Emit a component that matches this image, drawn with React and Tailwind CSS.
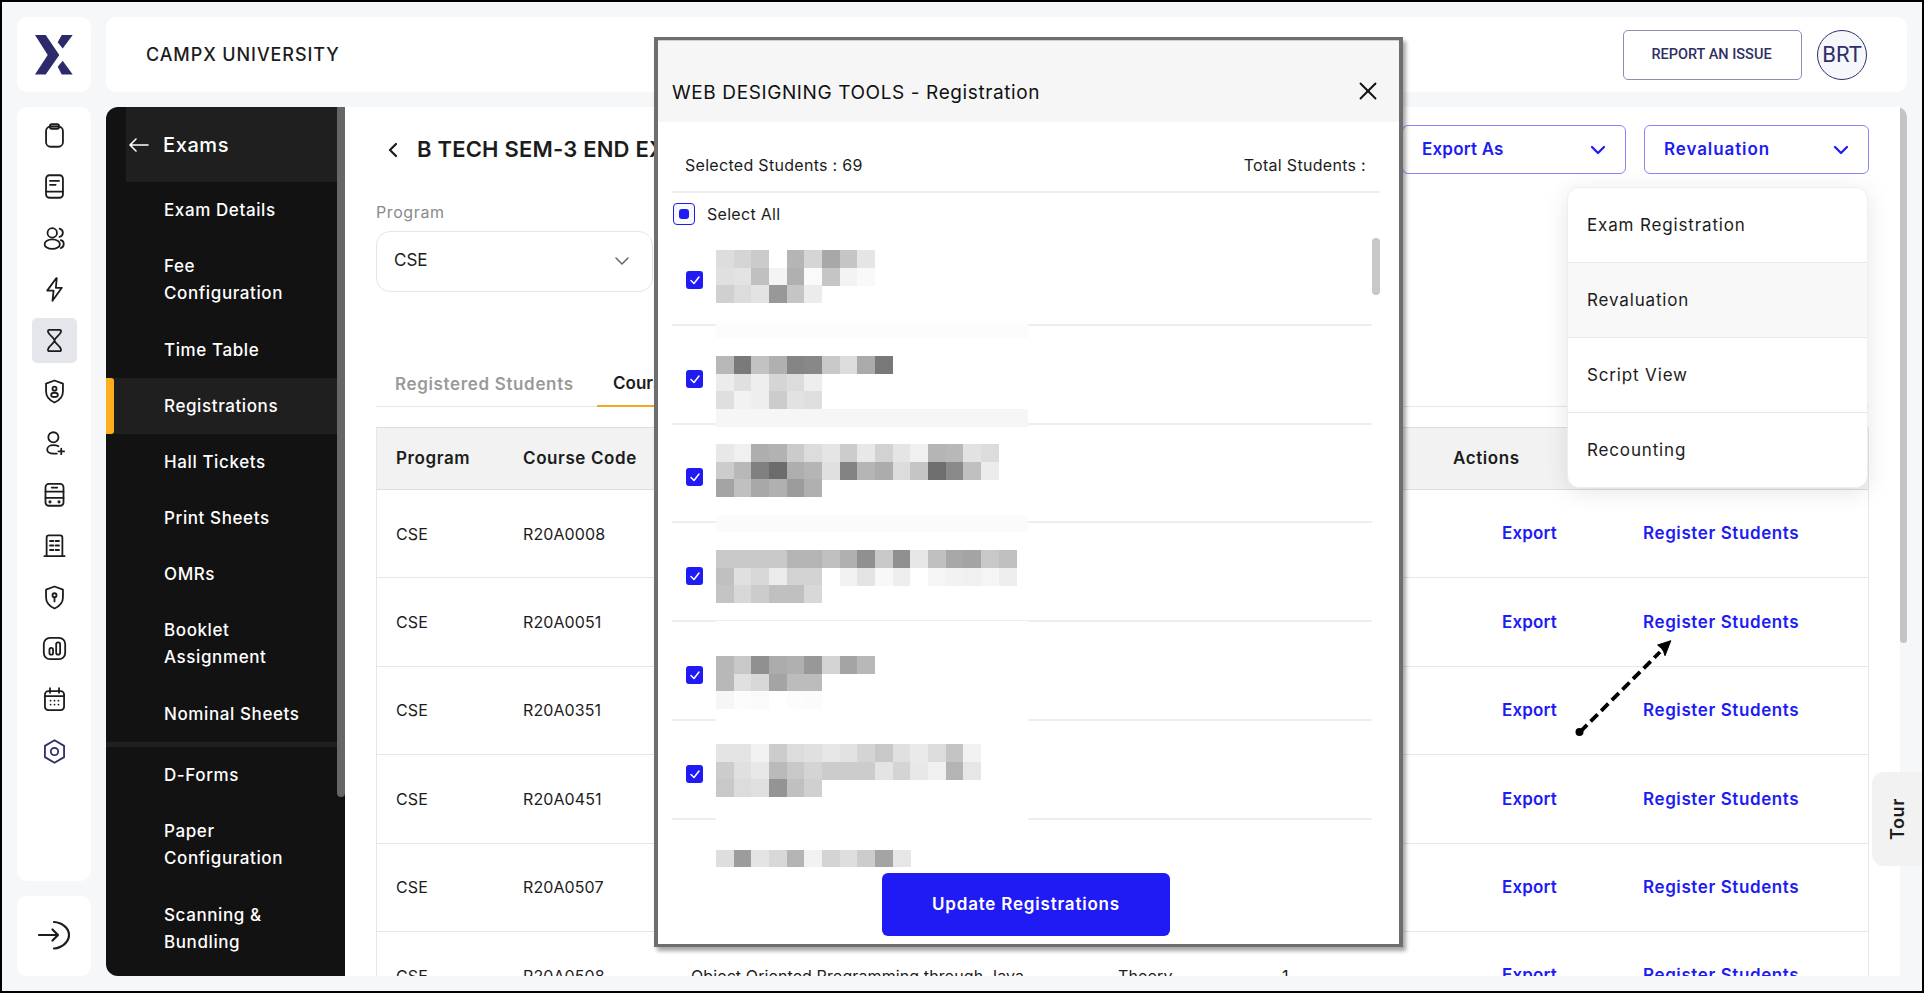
import { ChevronDown, ChevronLeft, X } from 'lucide-react'

const navIcons = [
  <><rect x="4.5" y="4" width="15" height="18" rx="4" /><rect x="8" y="2" width="8" height="4" rx="1.5" /></>,
  <><rect x="4.5" y="2" width="15" height="20" rx="3" /><path d="M4.5 16.5h15M8 7h8M8 10.5h5" /></>,
  <><circle cx="10" cy="7" r="4.2" /><ellipse cx="10" cy="17" rx="6.8" ry="4.3" /><path d="M16.5 3.2a3.8 3.8 0 0 1 0 7.4M17.5 13.5c3.6.8 3.6 6 0 7" /></>,
  <path d="M13.5 2 5.5 13h5.7l-1 9 8.3-11.5h-5.3l.8-8.5Z" />,
  <path d="M7.5 2.5h9c1.2 0 1.5 1 1.2 2-.8 3-5.7 5-5.7 7.5s4.900 4.500 5.700 7.500c.3 1 0 2-1.200 2h-9c-1.200 0-1.500-1-1.200-2C7.100 16.500 12 14.500 12 12S7.100 7.500 6.300 4.500c-.3-1 0-2 1.200-2Z" />,
  <><path d="M12 2.200 19.500 5v7c0 4.800-3.500 8-7.500 9.800C8 20 4.500 16.800 4.500 12V5L12 2.200Z" /><circle cx="12" cy="9.500" r="1.800" /><ellipse cx="12" cy="15" rx="3" ry="1.900" /></>,
  <><circle cx="11" cy="6.500" r="4.500" /><path d="M15.500 14.500c-1.200-.7-2.700-1-4.500-1-3.200 0-5.500 1.700-5.500 3.800s2.300 3.700 5.500 3.700h3M18 16.500v5M15.500 19h5" /></>,
  <><rect x="4" y="2.500" width="16" height="19.500" rx="3" /><path d="M4 9.500h16M4 15h16M9.500 5.800h5" /><circle cx="8" cy="18.500" r=".6" /><circle cx="16" cy="18.500" r=".6" /></>,
  <path d="M5 21.500V5a2 2 0 0 1 2-2h10a2 2 0 0 1 2 2v16.500M3 21.500h18M8 8h3M13 8h3M8 12h3M13 12h3M8 16h3M13 16h3" />,
  <><path d="M12 2.200 19.500 5v7c0 4.800-3.500 8-7.500 9.800C8 20 4.500 16.800 4.500 12V5L12 2.200Z" /><circle cx="12" cy="10" r="1.800" /><path d="M12 11.800v3.700" /></>,
  <><rect x="2.500" y="2.500" width="19" height="19" rx="5.500" /><rect x="7.500" y="11.500" width="3.200" height="6" rx="1.600" /><rect x="13.500" y="6.500" width="3.500" height="11" rx="1.700" /></>,
  <><rect x="3.500" y="4.500" width="17" height="17" rx="3" /><path d="M8 2v4M16 2v4M3.500 9h17M8.500 13h.01M12 13h.01M15.500 13h.01M8.500 16.500h.01M12 16.500h.01M15.500 16.500h.01" /></>,
  <><path d="M12 2 20.500 7v10L12 22l-8.500-5V7L12 2Z" /><circle cx="12" cy="12" r="3.300" /></>,
]

const sideItems = [
  ['Exam Details'],
  ['Fee', 'Configuration'],
  ['Time Table'],
  ['Registrations'],
  ['Hall Tickets'],
  ['Print Sheets'],
  ['OMRs'],
  ['Booklet', 'Assignment'],
  ['Nominal Sheets'],
]
const sideItems2 = [['D-Forms'], ['Paper', 'Configuration'], ['Scanning &', 'Bundling']]

const codes = ['R20A0008', 'R20A0051', 'R20A0351', 'R20A0451', 'R20A0507', 'R20A0508']

// pixelated names in the modal, grey values per cell
const students = [
  { top: 23, block: [4, '#fcfcfc'], rows: [['dd', 'd5', 'cb', 'ff', 'b5', 'd5', 'a8', 'c5', 'e5'], ['e0', 'e3', 'c0', 'f4', 'b0', 'fa', 'c5', 'f3', 'f9'], ['d0', 'dc', 'e3', '98', 'c5', 'ec']] },
  { top: 30, block: [3, '#f6f6f6'], rows: [['b8', '7a', 'c2', 'b0', '85', '88', 'c8', 'dc', 'aa', '78'], ['ec', 'e0', 'ee', 'd5', 'dc', 'ee'], ['df', 'f2', 'ee', 'cc', 'e2', 'df']] },
  { top: 19.4, block: [4, '#fbfbfb'], rows: [['e8', 'f0', 'ae', 'b2', 'cb', 'dc', 'e5', 'cc', 'e8', 'd2', 'e5', 'f0', 'b5', 'b8', 'e2', 'dc'], ['cc', 'b8', '80', '6c', 'ae', 'b5', 'e0', '82', 'b5', 'ac', 'dc', 'c5', '6e', '8a', 'c0', 'ec'], ['a4', 'c0', 'a8', 'b0', '9c', 'b0']] },
  { top: 26.6, block: [4, '#ffffff'], rows: [['c8', 'c8', 'c8', 'c8', 'b4', 'b4', 'c0', 'b0', '90', 'c8', '90', 'e6', 'c0', 'a8', 'a4', 'c8', 'c0'], ['c0', 'e0', 'd8', 'ec', 'd2', 'd2', 'ff', 'f2', 'e4', 'f8', 'ee', 'ff', 'f5', 'f2', 'f0', 'f5', 'ee'], ['c4', 'd8', 'cc', 'c0', 'c0', 'd8']] },
  { top: 33.8, block: [3, '#ffffff'], rows: [['b8', 'c8', '90', 'ac', 'b0', '98', 'd4', 'a4', 'b8'], ['b8', 'e0', 'd8', 'a4', 'bc', 'bc'], ['f6', 'fc', 'fa', 'ff', 'fc', 'fb']] },
  { top: 23, block: [4, '#ffffff'], rows: [['e4', 'e4', 'f2', 'cc', 'dc', 'e0', 'e6', 'e2', 'd4', 'c8', 'e0', 'ea', 'dc', 'c4', 'f2'], ['cc', 'e0', 'e8', 'ba', 'c8', 'd4', 'cc', 'cc', 'cc', 'e4', 'd4', 'e8', 'f0', 'b4', 'e6'], ['c8', 'dc', 'e0', '94', 'c0', 'd0']] },
  { top: 30.2, rows: [['de', '9c', 'e4', 'd8', 'b4', 'f2', 'd4', 'de', 'cc', 'a4', 'e6']] },
]

const CELL = 17.67

function Mosaic({ student }) {
  return (
    <svg width="312" height="90" className="absolute left-[44px] overflow-visible" style={{ top: student.top }} shapeRendering="crispEdges">
      {student.block && <rect x="0" y={student.block[0] * CELL} width="312" height={CELL} fill={student.block[1]} />}
      {student.rows.map((row, r) =>
        row.map((g, c) => (
          <rect key={`${r}-${c}`} x={c * CELL} y={r * CELL} width={CELL + 0.4} height={CELL + 0.4} fill={`#${g}${g}${g}`} />
        ))
      )}
    </svg>
  )
}

function SideItem({ lines, active }) {
  return (
    <div className={`flex items-center ${lines.length > 1 ? 'h-[84px]' : 'h-[56px]'} ${active ? 'bg-[#1f1f1f]' : ''}`}>
      <div className={`w-[8px] self-stretch rounded-r-[3px] ${active ? 'bg-[#fdae1c]' : ''}`} />
      <div className="pl-[50px] text-[17px] leading-[27px] font-medium text-white tracking-[0.6px]">
        {lines.map((l) => (
          <div key={l}>{l}</div>
        ))}
      </div>
    </div>
  )
}

export default function App() {
  return (
    <div className="relative box-border w-[1924px] h-[993px] border-2 border-black bg-[#f6f7f9] p-[15px] flex flex-col gap-[15px] overflow-hidden font-['Inter',sans-serif] text-[#1c1c1c]">
      {/* top row */}
      <div className="flex gap-[15px] h-[75px] shrink-0">
        <div className="w-[74px] bg-white rounded-[10px] flex items-center justify-center">
          <svg width="38" height="40" viewBox="0 0 38 40" fill="#2d2a6b">
            <path d="M0 0h10.700l13.600 20-13.600 19.500H0l12.700-19.500L0 0Z" />
            <path d="M26.700 0h11L27.700 13.500l-5-6.200 4-7.300ZM27.700 25.700l10 13.800h-11l-4-7.800 5-6Z" />
          </svg>
        </div>
        <div className="flex-1 bg-white rounded-[10px] flex items-center justify-between pl-[40px] pr-[40px]">
          <div className="text-[18px] font-medium tracking-[0.9px]">CAMPX UNIVERSITY</div>
          <div className="flex items-center gap-[15px]">
            <button className="w-[179px] h-[50px] border border-[#8f8cb8] rounded-[5px] font-['Roboto',sans-serif] text-[14.5px] font-medium text-[#302f62] pr-[2px]">
              REPORT AN ISSUE
            </button>
            <div className="w-[50px] h-[50px] rounded-full border border-[#2f2e6a] bg-[#f5f7fa] flex items-center justify-center font-['Roboto',sans-serif] text-[22px] text-[#2f2e6a]">
              BRT
            </div>
          </div>
        </div>
      </div>

      {/* body */}
      <div className="flex-1 min-h-0 flex gap-[15px]">
        <div className="w-[74px] shrink-0 flex flex-col gap-[15px]">
          <div className="flex-1 bg-white rounded-[10px] flex flex-col items-center pt-[6px] gap-[1.3px]">
            {navIcons.map((icon, i) => (
              <div key={i} className={`w-[45px] h-[45px] mb-[5px] rounded-[5px] flex items-center justify-center ${i === 4 ? 'bg-[#e4e6eb]' : ''}`}>
                <svg width="27" height="27" viewBox="0 0 24 24" fill="none" strokeWidth="1.600" strokeLinecap="round" strokeLinejoin="round" stroke={i === 12 ? '#2f2e6a' : '#1c1c1c'}>
                  {icon}
                </svg>
              </div>
            ))}
          </div>
          <div className="h-[80px] bg-white rounded-[10px] flex items-center justify-center">
            <svg width="32" height="32" viewBox="0 0 32 32" fill="none" stroke="#1c1c1c" strokeWidth="2.200" strokeLinecap="round" strokeLinejoin="round">
              <path d="M1 15h19M14.500 9.500 20 15l-5.500 5.500M16 2c8 .5 15 6 15 13s-7 13-15 13.500" />
            </svg>
          </div>
        </div>

        <div className="flex-1 min-w-0 flex">
          {/* dark sidebar */}
          <aside className="w-[239px] shrink-0 flex rounded-l-[12px] overflow-hidden bg-[#121212]">
            <div className="flex-1 min-w-0">
              <div className="h-[75px] flex">
                <div className="w-[20px]" />
                <div className="flex-1 bg-[#1f1f1f] flex items-center pl-[3px] gap-[14px] text-white">
                  <svg width="20" height="14" viewBox="0 0 20 14" fill="none" stroke="#fff" strokeWidth="1.600" strokeLinecap="round" strokeLinejoin="round">
                    <path d="M1 7h18M7 1 1 7l6 6" />
                  </svg>
                  <span className="text-[20px] font-medium tracking-[0.6px]">Exams</span>
                </div>
              </div>
              {sideItems.map((s) => (
                <SideItem key={s[0]} lines={s} active={s[0] === 'Registrations'} />
              ))}
              <div className="h-[5px] bg-[#1f1f1f]" />
              {sideItems2.map((s) => (
                <SideItem key={s[0]} lines={s} />
              ))}
            </div>
            <div className="w-[8px]">
              <div className="h-[690px] bg-[#666666] rounded-b-[4px]" />
            </div>
          </aside>

          {/* main */}
          <main className="flex-1 min-w-0 flex overflow-hidden rounded-r-[10px]">
            <div className="flex-1 min-w-0 bg-white pl-[31px] pr-[31px] pt-[18px]">
              <div className="flex items-center justify-between h-[49px]">
                <div className="flex items-center gap-[12px] pl-[5px] whitespace-nowrap">
                  <ChevronLeft size={24} strokeWidth={2.25} />
                  <span className="text-[22px] font-semibold tracking-[0.2px]">B TECH SEM-3 END EXAM</span>
                </div>
                <div className="flex gap-[18px]">
                  <button className="w-[224px] h-[49px] border border-[#8a86f5] rounded-[6px] flex items-center justify-between pl-[19px] pr-[15px] text-[17px] font-semibold text-[#201bf5] tracking-[0.2px]">
                    Export As
                    <ChevronDown size={24} strokeWidth={2.25} />
                  </button>
                  <button className="w-[225px] h-[49px] border border-[#8a86f5] rounded-[6px] flex items-center justify-between pl-[19px] pr-[15px] text-[17px] font-semibold text-[#201bf5] tracking-[0.9px]">
                    Revaluation
                    <ChevronDown size={24} strokeWidth={2.25} />
                  </button>
                </div>
              </div>

              <div className="mt-[28px] mb-[9px] h-[20px] text-[16px] leading-[20px] tracking-[0.6px] text-[#8a8a8a]">Program</div>
              <div className="w-[277px] h-[61px] border border-[#e5e5e5] rounded-[14px] flex items-center justify-between pl-[17px] pr-[18px] pb-[2px] text-[17px]">
                CSE
                <ChevronDown size={24} strokeWidth={1.5} className="text-[#666666]" />
              </div>

              <div className="mt-[70px] h-[45px] flex border-b border-[#e6e6e6]">
                <div className="ml-[19px] w-[202px] pt-[1px] flex items-center text-[17px] font-semibold text-[#9a9a9a] tracking-[0.65px] whitespace-nowrap">Registered Students</div>
                <div className="w-[150px] pl-[16px] pt-[1px] flex items-center text-[17px] font-semibold border-b-2 border-[#f5a623] h-[45px]">Courses</div>
              </div>

              <div className="mt-[20px] border-x border-[#e6e6e6]">
                <div className="h-[63px] bg-[#f2f2f2] border-y border-[#dddddd] flex items-center text-[17px] font-semibold tracking-[0.6px]">
                  <div className="w-[146px] pl-[19px]">Program</div>
                  <div className="w-[930px]">Course Code</div>
                  <div>Actions</div>
                </div>
                {codes.map((code, i) => (
                  <div key={code} className="h-[88.4px] border-b border-[#e6e6e6] flex items-center text-[16px] tracking-[0.1px]">
                    <div className="w-[146px] pl-[19px]">CSE</div>
                    <div className="w-[168px]">{code}</div>
                    <div className="w-[427px] whitespace-nowrap">{i === 5 && 'Object Oriented Programming through Java'}</div>
                    <div className="w-[164px]">{i === 5 && 'Theory'}</div>
                    <div className="w-[220px]">{i === 5 && '1'}</div>
                    <div className="w-[141px] pt-[1px] text-[17px] font-semibold text-[#201bf5] tracking-[0.15px]">Export</div>
                    <div className="pt-[1px] text-[17px] font-semibold text-[#201bf5] tracking-[0.6px] whitespace-nowrap">Register Students</div>
                  </div>
                ))}
              </div>
            </div>
            <div className="w-[7px]">
              <div className="h-[536px] bg-[#c4c4c4] rounded-b-[4px]" />
            </div>
          </main>
        </div>
      </div>

      {/* revaluation menu */}
      <div className="absolute left-[1565px] top-[185px] w-[301px] h-[301px] bg-white border border-[#eeeeee] rounded-[12px] shadow-[0_4px_24px_rgba(0,0,0,0.10)] overflow-hidden text-[17px] tracking-[0.85px]">
        {['Exam Registration', 'Revaluation', 'Script View', 'Recounting'].map((m, i) => (
          <div key={m} className={`h-[75px] flex items-center pl-[19px] pt-[1px] border-b border-[#e8e8e8] last:border-b-0 ${i === 1 ? 'bg-[#f8f8f8]' : ''}`}>
            {m}
          </div>
        ))}
      </div>

      {/* hint arrow */}
      <svg className="absolute left-[1568px] top-[628px]" width="110" height="112" viewBox="0 0 110 112" fill="none">
        <path d="M10 102 90 22" stroke="#000" strokeWidth="3.800" strokeDasharray="10 5" />
        <circle cx="9.500" cy="102" r="4" fill="#000" />
        <path d="M100.800 10.700 87.600 15l4 3.500 2 3 1.400 4.200 5.800-15Z" fill="#000" stroke="#000" strokeWidth="1" />
      </svg>

      {/* tour tab */}
      <div className="absolute left-[1870px] top-[770px] w-[50px] h-[94px] bg-[#f2f2f2] rounded-l-[12px] flex items-center justify-center">
        <span className="[writing-mode:vertical-rl] rotate-180 text-[18px] font-semibold tracking-[0.6px]">Tour</span>
      </div>

      {/* registration modal */}
      <div className="absolute left-[652px] top-[35px] box-border w-[749px] h-[910px] bg-white border-x-[4px] border-y-[3px] border-[#6e6e6e] shadow-[3px_4px_4px_rgba(0,0,0,0.35)] flex flex-col">
        <div className="h-[82px] shrink-0 bg-[#f6f6f6] border-t border-[#d0d0d0] flex justify-between pl-[14px] pr-[16px]">
          <div className="pt-[39px] text-[19px] leading-[26px] tracking-[0.6px] text-[#111111]">WEB DESIGNING TOOLS - Registration</div>
          <X size={30} strokeWidth={1.5} className="mt-[35px] text-[#111111]" />
        </div>
        <div className="ml-[14px] w-[708px] h-[71px] shrink-0 border-b-2 border-[#eeeeee] flex justify-between pl-[13px] pr-[14px] pt-[30px] text-[16px] leading-[26px] tracking-[0.3px]">
          <span>Selected Students : 69</span>
          <span>Total Students :</span>
        </div>
        <div className="ml-[15px] mt-[10px] shrink-0 flex items-center gap-[12px] h-[22px] text-[16px] tracking-[0.3px]">
          <div className="w-[22px] h-[22px] rounded-[4px] border border-[#201bf5] bg-[#f8f8f8] flex items-center justify-center">
            <div className="w-[10px] h-[10px] rounded-[3px] bg-[#201bf5]" />
          </div>
          Select All
        </div>
        <div className="relative ml-[14px] mt-[2px] w-[708px] h-[640px] shrink-0 overflow-hidden">
          {students.map((s, i) => (
            <div key={i} className="relative w-[700px] h-[98.8px] border-b-2 border-[#eeeeee] flex items-center pl-[14px] pt-[9px]">
              {i < 6 && (
                <div className="w-[17px] h-[18px] rounded-[3px] bg-[#201bf5] flex items-center justify-center">
                  <svg width="12" height="12" viewBox="0 0 12 12" fill="none" stroke="#fff" strokeWidth="1.500" strokeLinecap="round" strokeLinejoin="round">
                    <path d="M2 6.500 5 9.500 10 3" />
                  </svg>
                </div>
              )}
              <Mosaic student={s} />
            </div>
          ))}
          <div className="absolute left-[700px] top-[11px] w-[8px] h-[57px] rounded-[4px] bg-[#c8c8c8]" />
        </div>
        <button className="ml-[224px] mt-[6px] w-[288px] h-[63px] shrink-0 rounded-[6px] bg-[#201bf5] text-white text-[17px] font-semibold tracking-[0.8px]">
          Update Registrations
        </button>
      </div>
    </div>
  )
}
